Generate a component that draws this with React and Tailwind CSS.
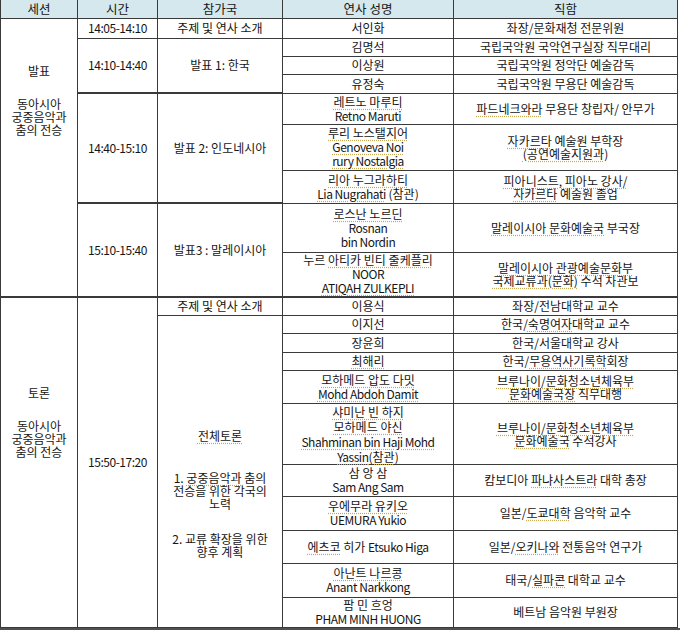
import React from 'react';

// cell styles for the schedule table
const cell = 'border border-[#3a3a3a] text-center align-middle p-0';
const dot = 'underline decoration-dotted decoration-[#c6a955] underline-offset-[2px]';

const U = ({ children }) => <span className={dot}>{children}</span>;
// latin names run a bit tighter than the hangul in the original
const L = ({ children, u }) => (
  <span className={'tracking-[-0.04em] ' + (u ? dot : '')}>{children}</span>
);

const Lines = ({ lines, lead = 'leading-[14px]' }) => (
  <div className={lead}>
    {lines.map((l, i) => (
      <div key={i}>{l}</div>
    ))}
  </div>
);

export default function App() {
  return (
    <div className="w-[680px] h-[630px] bg-white font-['Noto_Sans_CJK_KR','Noto_Sans',sans-serif] text-[12px] leading-[14px] text-[#151515] overflow-hidden">
      <table className="table-fixed border-collapse w-[677px]">
        <colgroup>
          <col className="w-[77px]" />
          <col className="w-[80px]" />
          <col className="w-[125px]" />
          <col className="w-[171px]" />
          <col className="w-[224px]" />
        </colgroup>
        <thead>
          <tr className="h-[18px] bg-[#d5e8ee] text-[12.5px]">
            <th className={cell + ' border-t-0 font-normal'}>세션</th>
            <th className={cell + ' border-t-0 font-normal'}>시간</th>
            <th className={cell + ' border-t-0 font-normal'}>참가국</th>
            <th className={cell + ' border-t-0 font-normal'}>연사 성명</th>
            <th className={cell + ' border-t-0 font-normal'}>직함</th>
          </tr>
        </thead>
        <tbody>
          {/* 발표 session */}
          <tr className="h-[20px]">
            <td rowSpan={9} className={cell + ' align-top border-b-2'}>
              <div className="pt-[45px] leading-[13px]">
                <div>발표</div>
                <div className="mt-[20px]">동아시아</div>
                <div>궁중음악과</div>
                <div>춤의 전승</div>
              </div>
            </td>
            <td className={cell}><L>14:05-14:10</L></td>
            <td className={cell}>주제 및 연사 소개</td>
            <td className={cell}>서인화</td>
            <td className={cell}>좌장/문화재청 전문위원</td>
          </tr>
          <tr className="h-[18px]">
            <td rowSpan={3} className={cell + ' border-b-2'}><L>14:10-14:40</L></td>
            <td rowSpan={3} className={cell + ' border-b-2'}>발표 1: 한국</td>
            <td className={cell}>김명석</td>
            <td className={cell}>국립국악원 국악연구실장 직무대리</td>
          </tr>
          <tr className="h-[18px]">
            <td className={cell}>이상원</td>
            <td className={cell}>국립국악원 정악단 예술감독</td>
          </tr>
          <tr className="h-[19px]">
            <td className={cell}>유정숙</td>
            <td className={cell}>국립국악원 무용단 예술감독</td>
          </tr>
          <tr className="h-[31px]">
            <td rowSpan={3} className={cell + ' border-b-2'}><L>14:40-15:10</L></td>
            <td rowSpan={3} className={cell + ' border-b-2'}>발표 2: 인도네시아</td>
            <td className={cell}>
              <Lines lines={[<U>레트노 마루티</U>, <L>Retno Maruti</L>]} />
            </td>
            <td className={cell}>
              <U>파드네크와라</U> 무용단 창립자/ 안무가
            </td>
          </tr>
          <tr className="h-[46px]">
            <td className={cell}>
              <Lines lines={[<U>루리 노스탤지어</U>, <L u>Genoveva Noi</L>, <L u>rury Nostalgia</L>]} />
            </td>
            <td className={cell}>
              <Lines lines={[<span><U>자카르타</U> 예술원 부학장</span>, <U>(공연예술지원과)</U>]} lead="leading-[13px]" />
            </td>
          </tr>
          <tr className="h-[33px]">
            <td className={cell}>
              <Lines lines={[<U>리아 누그라하티</U>, <span><L u>Lia Nugrahati</L> (참관)</span>]} />
            </td>
            <td className={cell}>
              <Lines lines={[<U>피아니스트, 피아노 강사/</U>, <span><U>자카르타</U> 예술원 졸업</span>]} lead="leading-[13px]" />
            </td>
          </tr>
          <tr className="h-[49px]">
            <td rowSpan={2} className={cell + ' border-b-2'}><L>15:10-15:40</L></td>
            <td rowSpan={2} className={cell + ' border-b-2'}>발표3 : 말레이시아</td>
            <td className={cell}>
              <Lines lines={[<U>로스난 노르딘</U>, <L>Rosnan</L>, <L>bin Nordin</L>]} />
            </td>
            <td className={cell}>
              <U>말레이시아 문화예술국</U> 부국장
            </td>
          </tr>
          <tr className="h-[45px]">
            <td className={cell + ' border-b-2'}>
              <Lines lines={[<span>누르 <U>아티카 빈티 줄케플리</U></span>, <L>NOOR</L>, <L u>ATIQAH ZULKEPLI</L>]} />
            </td>
            <td className={cell + ' border-b-2'}>
              <Lines lines={[<U>말레이시아 관광예술문화부</U>, <span><U>국제교류과(문화)</U> 수석 차관보</span>]} lead="leading-[13px]" />
            </td>
          </tr>

          {/* 토론 session */}
          <tr className="h-[18px]">
            <td rowSpan={11} className={cell + ' align-top'}>
              <div className="pt-[88px] leading-[13px]">
                <div>토론</div>
                <div className="mt-[20px]">동아시아</div>
                <div>궁중음악과</div>
                <div>춤의 전승</div>
              </div>
            </td>
            <td rowSpan={11} className={cell}><L>15:50-17:20</L></td>
            <td className={cell}>주제 및 연사 소개</td>
            <td className={cell}>이용식</td>
            <td className={cell}>좌장/전남대학교 교수</td>
          </tr>
          <tr className="h-[18px]">
            <td rowSpan={10} className={cell + ' align-top'}>
              <div className="pt-[113px] leading-[13px]">
                <div><U>전체토론</U></div>
                <div className="mt-[29px]">1. <U>궁중음악과</U> 춤의</div>
                <div>전승을 위한 각국의</div>
                <div>노력</div>
                <div className="mt-[22px]">2. 교류 확장을 위한</div>
                <div>향후 계획</div>
              </div>
            </td>
            <td className={cell}>이지선</td>
            <td className={cell}>한국/<U>숙명여자</U>대학교 교수</td>
          </tr>
          <tr className="h-[19px]">
            <td className={cell}>장윤희</td>
            <td className={cell}>한국/서울대학교 강사</td>
          </tr>
          <tr className="h-[18px]">
            <td className={cell}><U>최해리</U></td>
            <td className={cell}>한국/<U>무용역사기록학</U>회장</td>
          </tr>
          <tr className="h-[33px]">
            <td className={cell}>
              <Lines lines={[<U>모하메드 압도 다밋</U>, <L u>Mohd Abdoh Damit</L>]} />
            </td>
            <td className={cell}>
              <Lines lines={[<U>브루나이/문화청소년체육부</U>, <span><U>문화예술국장</U> 직무대행</span>]} lead="leading-[13px]" />
            </td>
          </tr>
          <tr className="h-[60px]">
            <td className={cell}>
              <Lines
                lines={[<U>샤미난 빈 하지</U>, <U>모하메드 야신</U>, <L u>Shahminan bin Haji Mohd</L>, <span><L u>Yassin</L><U>(참관)</U></span>]}
                lead="leading-[15px]"
              />
            </td>
            <td className={cell}>
              <Lines lines={[<U>브루나이/문화청소년체육부</U>, <span><U>문화예술국</U> 수석강사</span>]} lead="leading-[13px]" />
            </td>
          </tr>
          <tr className="h-[32px]">
            <td className={cell}>
              <Lines lines={['삼 앙 삼', <L>Sam Ang Sam</L>]} />
            </td>
            <td className={cell}>
              캄보디아 <U>파냐사스트라</U> 대학 총장
            </td>
          </tr>
          <tr className="h-[34px]">
            <td className={cell}>
              <Lines lines={[<U>우에무라 유키오</U>, <L>UEMURA Yukio</L>]} />
            </td>
            <td className={cell}>
              일본/<U>도쿄대학</U> 음악학 교수
            </td>
          </tr>
          <tr className="h-[33px]">
            <td className={cell}>
              <U>에츠코</U> 히가 <L>Etsuko Higa</L>
            </td>
            <td className={cell}>
              일본/<U>오키나와</U> 전통음악 연구가
            </td>
          </tr>
          <tr className="h-[34px]">
            <td className={cell}>
              <Lines lines={[<U>아난트 나르콩</U>, <L>Anant Narkkong</L>]} />
            </td>
            <td className={cell}>
              태국/<U>실파콘</U> 대학교 교수
            </td>
          </tr>
          <tr className="h-[30px]">
            <td className={cell}>
              <Lines lines={['팜 민 흐엉', <L>PHAM MINH HUONG</L>]} />
            </td>
            <td className={cell}>베트남 음악원 부원장</td>
          </tr>
        </tbody>
      </table>
      <div className="h-[5px] bg-[#505050]" />
    </div>
  );
}
